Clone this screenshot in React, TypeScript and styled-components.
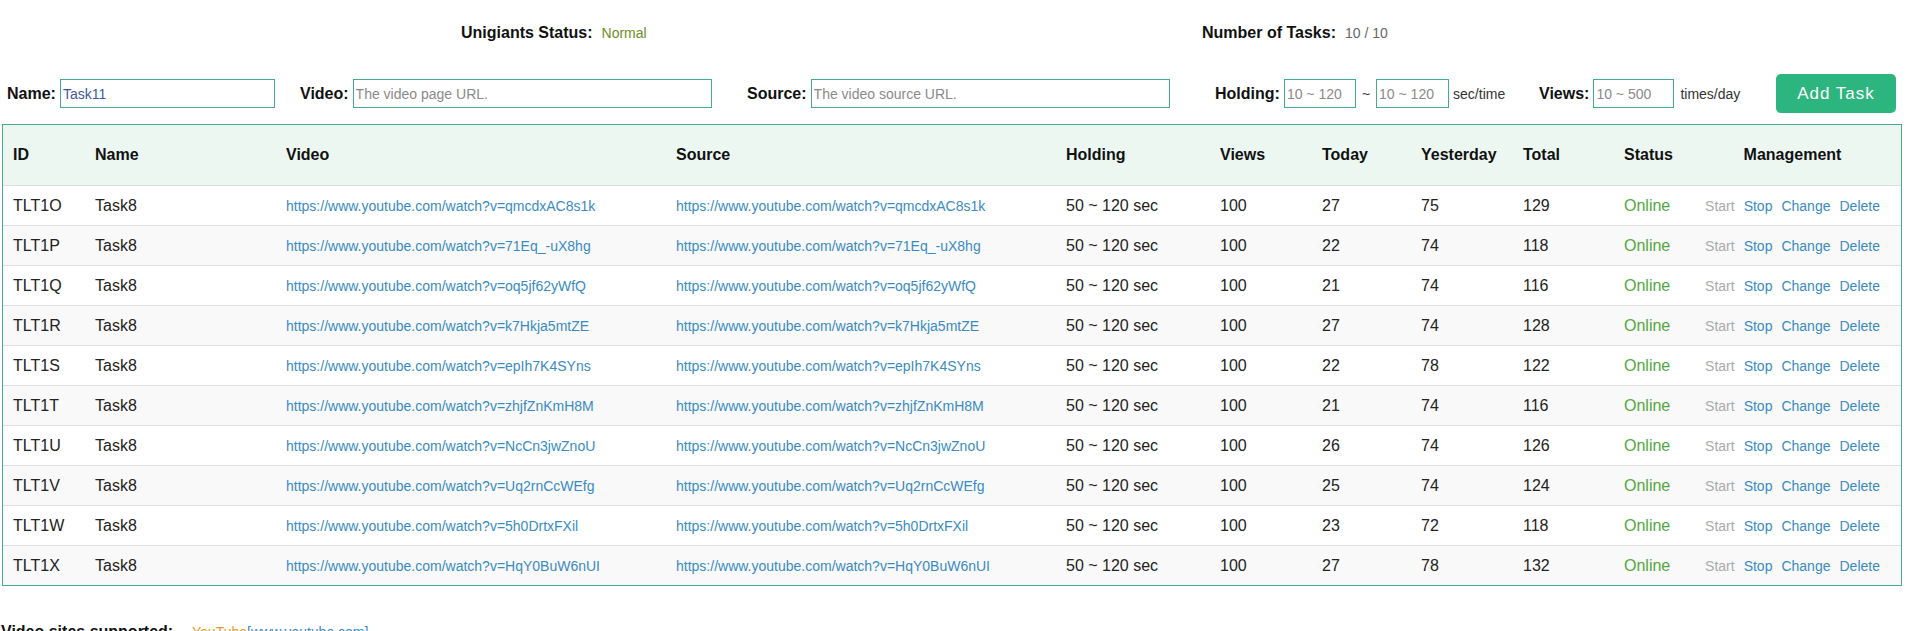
import React from 'react'
import styled, { createGlobalStyle } from 'styled-components'

const GlobalStyle = createGlobalStyle`
    html {
        overflow-y: scroll;
    }
    html::-webkit-scrollbar {
        width: 12px;
    }
    html::-webkit-scrollbar-track {
        background: #f1f1f1;
    }
    html::-webkit-scrollbar-thumb {
        background: #c1c1c1;
    }
    body {
        margin: 0;
        font-family: "Liberation Sans", Arial, sans-serif;
        color: #111;
        background: #fff;
    }
`

// data for the task table
const tasks = [
    { id: 'TLT1O', code: 'qmcdxAC8s1k', today: 27, yesterday: 75, total: 129 },
    { id: 'TLT1P', code: '71Eq_-uX8hg', today: 22, yesterday: 74, total: 118 },
    { id: 'TLT1Q', code: 'oq5jf62yWfQ', today: 21, yesterday: 74, total: 116 },
    { id: 'TLT1R', code: 'k7Hkja5mtZE', today: 27, yesterday: 74, total: 128 },
    { id: 'TLT1S', code: 'epIh7K4SYns', today: 22, yesterday: 78, total: 122 },
    { id: 'TLT1T', code: 'zhjfZnKmH8M', today: 21, yesterday: 74, total: 116 },
    { id: 'TLT1U', code: 'NcCn3jwZnoU', today: 26, yesterday: 74, total: 126 },
    { id: 'TLT1V', code: 'Uq2rnCcWEfg', today: 25, yesterday: 74, total: 124 },
    { id: 'TLT1W', code: '5h0DrtxFXil', today: 23, yesterday: 72, total: 118 },
    { id: 'TLT1X', code: 'HqY0BuW6nUI', today: 27, yesterday: 78, total: 132 },
]

const columns = [
    { title: 'ID', width: 82 },
    { title: 'Name', width: 191 },
    { title: 'Video', width: 390 },
    { title: 'Source', width: 390 },
    { title: 'Holding', width: 154 },
    { title: 'Views', width: 102 },
    { title: 'Today', width: 99 },
    { title: 'Yesterday', width: 102 },
    { title: 'Total', width: 101 },
    { title: 'Status', width: 70 },
    { title: 'Management', width: 217, center: true },
]

const Page = styled.div`
    width: 1902px;
`

const StatusBar = styled.div`
    display: flex;
    align-items: center;
    height: 66px;
    padding-left: 461px;
`

const StatusItem = styled.div<{ $width?: number }>`
    display: flex;
    align-items: baseline;
    width: ${(p) => (p.$width ? `${p.$width}px` : 'auto')};
`

const Label = styled.span`
    font-size: 16px;
    font-weight: bold;
    color: #111;
    margin-right: 4px;
`

const StatusValue = styled.span<{ $color: string }>`
    font-size: 14px;
    color: ${(p) => p.$color};
    margin-left: 5px;
`

const FormRow = styled.div`
    display: flex;
    align-items: center;
    height: 39px;
    margin-top: 8px;
    padding-left: 7px;
`

const Field = styled.div<{ $width: number }>`
    display: flex;
    align-items: center;
    width: ${(p) => p.$width}px;
`

const Input = styled.input<{ $width: number }>`
    box-sizing: border-box;
    width: ${(p) => p.$width}px;
    height: 29px;
    border: 1px solid #45ad8e;
    border-radius: 0;
    padding: 0 2px;
    font-family: "Liberation Sans", Arial, sans-serif;
    font-size: 14px;
    color: #3f5a9a;
    outline: none;
    &::placeholder {
        color: #8a8a8a;
    }
`

const Unit = styled.span<{ $gap: number }>`
    font-size: 14px;
    color: #333;
    margin: 0 ${(p) => p.$gap}px;
`

const AddButton = styled.button`
    width: 120px;
    height: 39px;
    border: none;
    border-radius: 5px;
    background: #2cb57e;
    color: #fff;
    font-family: "Liberation Sans", Arial, sans-serif;
    font-size: 17px;
    letter-spacing: 1px;
    cursor: pointer;
`

const TableWrap = styled.div`
    margin: 11px 0 0 2px;
`

const Table = styled.table`
    width: 1900px;
    table-layout: fixed;
    border-collapse: separate;
    border-spacing: 0;
    border: 1px solid #45ad8e;
`

const Th = styled.th<{ $center?: boolean }>`
    height: 60px;
    padding: 0 10px;
    background: #edf7f2;
    font-size: 16px;
    font-weight: bold;
    color: #111;
    text-align: ${(p) => (p.$center ? 'center' : 'left')};
    vertical-align: middle;
`

const Tr = styled.tr<{ $even: boolean }>`
    background: ${(p) => (p.$even ? '#f9f9f9' : '#fff')};
`

const Td = styled.td<{ $center?: boolean }>`
    height: 39px;
    padding: 0 10px;
    border-top: 1px solid #dfdfdf;
    font-size: 16px;
    color: #222;
    text-align: ${(p) => (p.$center ? 'center' : 'left')};
    vertical-align: middle;
    white-space: nowrap;
`

const Link = styled.a`
    font-size: 14px;
    color: #3a8bc3;
    text-decoration: none;
`

const Online = styled.span`
    color: #52a83e;
`

const Actions = styled.div`
    display: flex;
    justify-content: center;
    gap: 9px;
`

const Action = styled.a<{ $disabled?: boolean }>`
    font-size: 14px;
    color: ${(p) => (p.$disabled ? '#aaa' : '#3a8bc3')};
    text-decoration: none;
    cursor: pointer;
`

const Sites = styled.div`
    display: flex;
    align-items: baseline;
    margin-top: 37px;
    padding-left: 1px;
`

const SitesLabel = styled.span`
    font-size: 16px;
    font-weight: bold;
    width: 191px;
`

const SiteName = styled.span`
    font-size: 14px;
    color: #e89a2c;
`

const App = () => {
    return (
        <Page>
            <GlobalStyle />
            <StatusBar>
                <StatusItem $width={741}>
                    <Label>Unigiants Status:</Label>
                    <StatusValue $color="#6b8e23">Normal</StatusValue>
                </StatusItem>
                <StatusItem>
                    <Label>Number of Tasks:</Label>
                    <StatusValue $color="#666">10 / 10</StatusValue>
                </StatusItem>
            </StatusBar>

            <FormRow>
                <Field $width={293}>
                    <Label>Name:</Label>
                    <Input $width={215} defaultValue="Task11" />
                </Field>
                <Field $width={447}>
                    <Label>Video:</Label>
                    <Input $width={359} placeholder="The video page URL." />
                </Field>
                <Field $width={468}>
                    <Label>Source:</Label>
                    <Input $width={359} placeholder="The video source URL." />
                </Field>
                <Field $width={324}>
                    <Label>Holding:</Label>
                    <Input $width={72} placeholder="10 ~ 120" />
                    <Unit $gap={6}>~</Unit>
                    <Input $width={73} placeholder="10 ~ 120" />
                    <Unit $gap={4}>sec/time</Unit>
                </Field>
                <Field $width={237}>
                    <Label>Views:</Label>
                    <Input $width={81} placeholder="10 ~ 500" />
                    <Unit $gap={6}>times/day</Unit>
                </Field>
                <AddButton>Add Task</AddButton>
            </FormRow>

            <TableWrap>
                <Table>
                    <colgroup>
                        {columns.map((c) => (
                            <col key={c.title} style={{ width: c.width }} />
                        ))}
                    </colgroup>
                    <thead>
                        <tr>
                            {columns.map((c) => (
                                <Th key={c.title} $center={c.center}>{c.title}</Th>
                            ))}
                        </tr>
                    </thead>
                    <tbody>
                        {tasks.map((t, i) => {
                            const url = `https://www.youtube.com/watch?v=${t.code}`
                            return (
                                <Tr key={t.id} $even={i % 2 === 1}>
                                    <Td>{t.id}</Td>
                                    <Td>Task8</Td>
                                    <Td><Link>{url}</Link></Td>
                                    <Td><Link>{url}</Link></Td>
                                    <Td>50 ~ 120 sec</Td>
                                    <Td>100</Td>
                                    <Td>{t.today}</Td>
                                    <Td>{t.yesterday}</Td>
                                    <Td>{t.total}</Td>
                                    <Td><Online>Online</Online></Td>
                                    <Td $center>
                                        <Actions>
                                            <Action $disabled>Start</Action>
                                            <Action>Stop</Action>
                                            <Action>Change</Action>
                                            <Action>Delete</Action>
                                        </Actions>
                                    </Td>
                                </Tr>
                            )
                        })}
                    </tbody>
                </Table>
            </TableWrap>

            <Sites>
                <SitesLabel>Video sites supported:</SitesLabel>
                <SiteName>YouTube</SiteName>
                <Link>[www.youtube.com]</Link>
            </Sites>
        </Page>
    )
}

export default App
